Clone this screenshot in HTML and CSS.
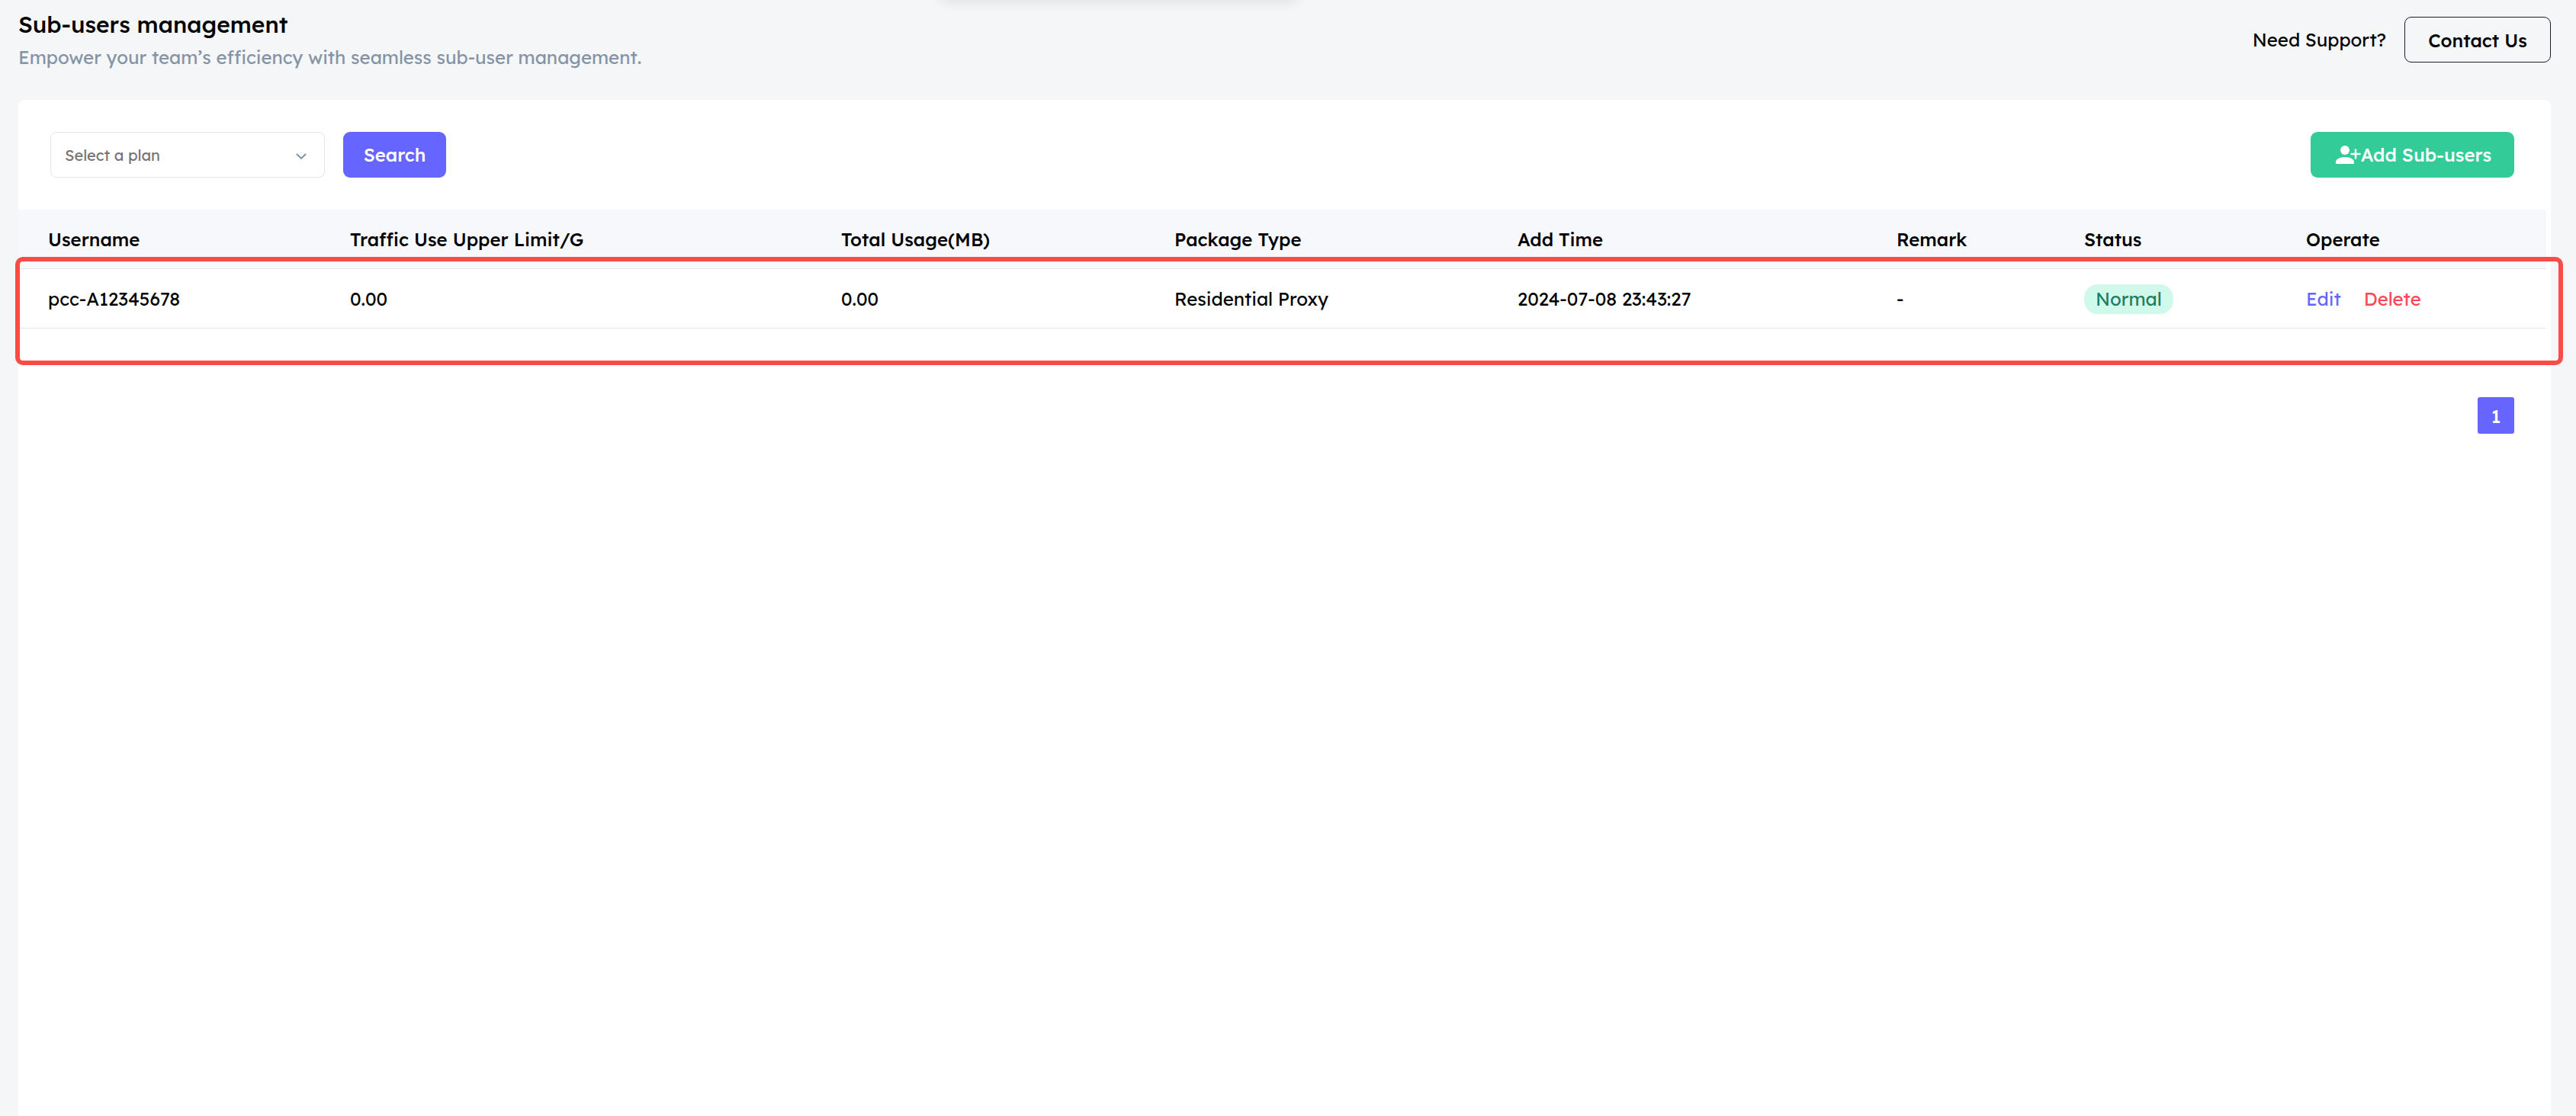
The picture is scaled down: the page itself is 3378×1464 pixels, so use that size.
FILE: index.html
```html
<!DOCTYPE html>
<html lang="en">
<head>
<meta charset="utf-8">
<title>Sub-users management</title>
<link rel="stylesheet" href="styles.css">
</head>
<body>
<div class="top-shadow"></div>
<header class="page-header">
  <div class="heading">
    <h1 class="title">Sub-users management</h1>
    <p class="subtitle">Empower your team’s efficiency with seamless sub-user management.</p>
  </div>
  <div class="support">
    <span class="support-label">Need Support?</span>
    <button class="btn btn-outline">Contact Us</button>
  </div>
</header>
<main class="card">
  <div class="toolbar">
    <div class="select">
      <span>Select a plan</span>
      <svg class="chevron" width="14" height="8" viewBox="0 0 14 8"><path d="M1 1l6 5.8L13 1" fill="none" stroke="#8493a5" stroke-width="2"/></svg>
    </div>
    <button class="btn btn-primary">Search</button>
    <button class="btn btn-success"><svg width="34" height="32" viewBox="0 0 34 32" fill="#fff"><circle cx="13" cy="10" r="6"/><path d="M1 27v-1.400C1 21.500 7 19 13 19s12 2.500 12 6.600V27q0 1-1 1H2q-1 0-1-1z"/><path d="M27 9.500v11M21.500 15h11" stroke="#fff" stroke-width="2.500" stroke-linecap="round"/></svg><span>Add Sub-users</span></button>
  </div>
  <div class="table-wrap">
    <table class="table">
      <colgroup><col class="c-user"><col class="c-limit"><col class="c-usage"><col class="c-type"><col class="c-time"><col class="c-remark"><col class="c-status"><col></colgroup>
      <thead>
        <tr><th>Username</th><th>Traffic Use Upper Limit/G</th><th>Total Usage(MB)</th><th>Package Type</th><th>Add Time</th><th>Remark</th><th>Status</th><th>Operate</th></tr>
      </thead>
      <tbody>
        <tr><td>pcc-A12345678</td><td>0.00</td><td>0.00</td><td>Residential Proxy</td><td>2024-07-08 23:43:27</td><td>-</td><td><span class="badge">Normal</span></td><td><a class="edit">Edit</a><a class="delete">Delete</a></td></tr>
      </tbody>
    </table>
    <div class="highlight"></div>
  </div>
  <nav class="pager"><span class="page">1</span></nav>
</main>
</body>
</html>
```
FILE: styles.css
```css
* { box-sizing: border-box; }
body {
  margin: 0;
  height: 1464px;
  padding: 0 33px 0 24px;
  display: flex;
  flex-direction: column;
  overflow: hidden;
  background: #f4f6f8;
  color: #000;
  font: 400 24px/36px Lexend, Inter, "Liberation Sans", sans-serif;
}
.top-shadow {
  position: absolute;
  top: -40px;
  left: 1236px;
  width: 464px;
  height: 38px;
  box-shadow: 0 4px 18px rgba(0, 0, 0, .1);
}
.page-header {
  height: 131px;
  display: flex;
  justify-content: space-between;
  align-items: flex-start;
}
.heading { padding-top: 11px; }
.title {
  margin: 0;
  font-size: 30px;
  font-weight: 500;
  line-height: 42px;
}
.subtitle {
  margin: 4px 0 0;
  color: #8493a5;
}
.support {
  display: flex;
  align-items: center;
  gap: 24px;
  padding-top: 22px;
}
.btn {
  height: 60px;
  padding: 0;
  border: 0;
  border-radius: 9px;
  color: #fff;
  font: inherit;
  font-weight: 500;
  display: flex;
  align-items: center;
  justify-content: center;
}
.btn-outline {
  width: 192px;
  padding-top: 2px;
  border: 1px solid #1b1e2b;
  background: none;
  color: #000;
}
.btn-primary { width: 135px; background: #6666ff; }
.btn-success {
  width: 267px;
  margin-left: auto;
  padding-left: 2px;
  background: #33cc99;
}
.card {
  flex: 1;
  background: #fff;
  border-radius: 8px 8px 0 0;
}
.toolbar {
  height: 144px;
  padding: 42px 48px 0 42px;
  display: flex;
  gap: 24px;
}
.select {
  width: 360px;
  height: 60px;
  padding: 1px 23px 0 18px;
  border: 1px solid #e4e5ea;
  border-radius: 8px;
  display: flex;
  align-items: center;
  justify-content: space-between;
  color: #757575;
  font-size: 20px;
}
.chevron { margin-top: 2px; }
.table-wrap {
  position: relative;
  width: 3315px;
}
.table {
  width: 100%;
  table-layout: fixed;
  border-collapse: separate;
  border-spacing: 0;
}
.c-user { width: 396px; }
.c-limit { width: 644px; }
.c-usage { width: 437px; }
.c-type { width: 450px; }
.c-time { width: 497px; }
.c-remark { width: 246px; }
.c-status { width: 290px; }
th, td {
  height: 78px;
  padding: 1px 0 0 39px;
  border-bottom: 1px solid #e4e5ea;
  text-align: left;
  vertical-align: middle;
  white-space: nowrap;
}
th {
  background: #f6f8fc;
  font-weight: 500;
}
th:last-child, td:last-child { padding-left: 40px; }
.badge {
  display: inline-block;
  height: 39px;
  padding: 0 15px;
  border-radius: 18px;
  background: #d0f8eb;
  color: #1b7f62;
  line-height: 39px;
}
.edit { color: #6666ff; }
.delete { margin-left: 30px; color: #ff4757; }
.highlight {
  position: absolute;
  left: -4px;
  top: 62px;
  width: 3341px;
  height: 142px;
  border: 6px solid #fa4b46;
  border-radius: 10px;
}
.pager {
  display: flex;
  justify-content: flex-end;
  padding: 90px 48px 0 0;
}
.page {
  width: 48px;
  height: 48px;
  border-radius: 3px;
  background: #6666ff;
  color: #fff;
  font-weight: 500;
  line-height: 50px;
  text-align: center;
}
```
